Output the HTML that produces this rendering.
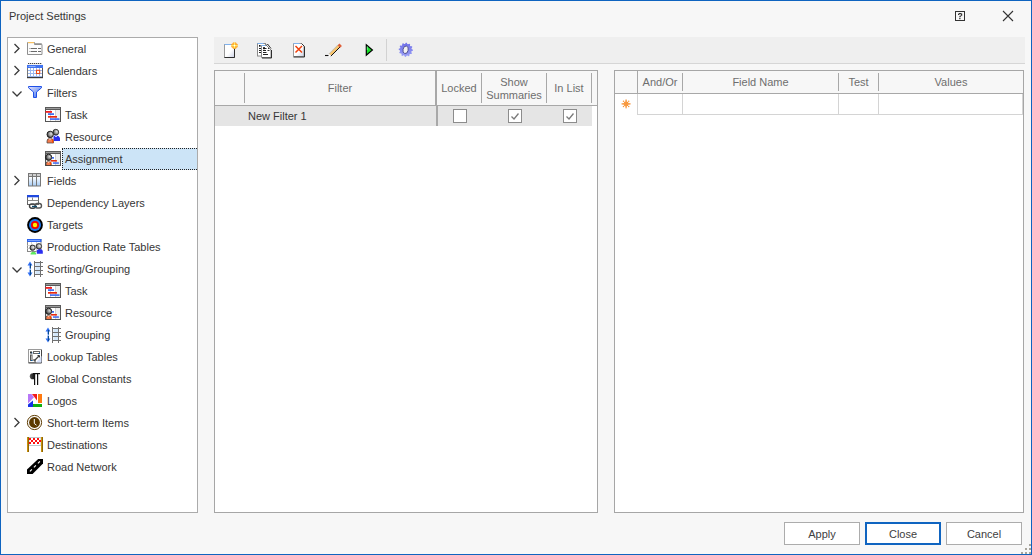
<!DOCTYPE html>
<html><head><meta charset="utf-8">
<style>
*{box-sizing:border-box;margin:0;padding:0}
html,body{width:1032px;height:555px;overflow:hidden;background:#f7f7f7}
body{position:relative;font-family:"Liberation Sans",sans-serif;font-size:11px;color:#363636}
.a{position:absolute}
svg.a{overflow:visible}
.win{left:0;top:0;width:1032px;height:555px;border:1px solid #0f64c0}
.t{position:absolute;white-space:nowrap;line-height:22px;height:22px}
.sel{background:#cce4f7;border:1px dotted #222;border-right:none}
.tree{left:7px;top:37px;width:191px;height:476px;border:1px solid #ababab;background:#fff}
.tb{left:214px;top:37px;width:811px;height:27px;background:#efefef;border-bottom:1px solid #d6d6d6}
.grid{border:1px solid #a6a6a6;background:#fff}
.hd{position:absolute;color:#6e6e6e;white-space:nowrap;text-align:center;line-height:13px}
.vs{position:absolute;width:1px;background:#a8a8a8}
.hs{position:absolute;height:1px;background:#a8a8a8}
.btn{position:absolute;top:522px;height:23px;border:1px solid #acacac;background:#fff;text-align:center;line-height:21px;color:#404040}
.cb{position:absolute;width:14px;height:14px;border:1px solid #8c8c8c;background:#fff}
</style></head><body>
<div class="a win"></div>
<div class="t" style="left:9px;top:5px">Project Settings</div>
<svg class="a" style="left:950px;top:6px" width="20" height="20" viewBox="0 0 20 20">
<rect x="5.5" y="5.5" width="9" height="9" fill="none" stroke="#333" stroke-width="1"/>
<g fill="#333"><rect x="8.6" y="7" width="2.8" height="1.2"/><rect x="8" y="8" width="1.3" height="1"/><rect x="10.9" y="7.6" width="1.3" height="2.2"/><rect x="9.8" y="9.6" width="1.3" height="1.1"/><rect x="9.2" y="10.3" width="1.3" height="1"/><rect x="9.2" y="12" width="1.3" height="1.2"/></g>
</svg>
<svg class="a" style="left:998px;top:6px" width="20" height="20" viewBox="0 0 20 20">
<path d="M5 5L15 15M15 5L5 15" stroke="#333" stroke-width="1.1"/>
</svg>

<div class="a tree"></div>
<svg class="a" style="left:12px;top:43px" width="10" height="12" viewBox="0 0 10 12" ><path d="M2.5 1L7 5.5L2.5 10" fill="none" stroke="#3a3a3a" stroke-width="1.3"/></svg>
<svg class="a" style="left:27px;top:41px" width="16" height="16" viewBox="0 0 16 16" >
<path d="M0.5 13.5V1.5h7v2h7.5v10z" fill="#fcfcfc" stroke="#8f8f8f"/>
<rect x="1" y="1" width="6" height="1.2" fill="#f8c060"/>
<path d="M7.5 2.5h7v1" fill="none" stroke="#a8a8a8"/>
<path d="M2 7.5h8M11 7.5h3M2 10.5h8M11 10.5h3" stroke="#6a6a6a" stroke-width="1"/>
<path d="M2 7.5h2M2 10.5h2" stroke="#bbb" stroke-width="1"/>
</svg>
<div class="t" style="left:47px;top:38px">General</div>
<svg class="a" style="left:12px;top:65px" width="10" height="12" viewBox="0 0 10 12" ><path d="M2.5 1L7 5.5L2.5 10" fill="none" stroke="#3a3a3a" stroke-width="1.3"/></svg>
<svg class="a" style="left:27px;top:63px" width="16" height="16" viewBox="0 0 16 16" >
<rect x="0" y="4.5" width="16" height="10" fill="#9ab7ee"/>
<rect x="0" y="2" width="16" height="3" fill="#3f72f0"/>
<path d="M1.5 3.5h7" stroke="#9fc0ff" stroke-width="0.8"/>
<g fill="#444"><rect x="1" y="0" width="1.3" height="1.3"/><rect x="3" y="0" width="1.3" height="1.3"/><rect x="5" y="0" width="1.3" height="1.3"/><rect x="7" y="0" width="1.3" height="1.3"/><rect x="9" y="0" width="1.3" height="1.3"/><rect x="11" y="0" width="1.3" height="1.3"/><rect x="13" y="0" width="1.3" height="1.3"/></g>
<rect x="0" y="1" width="16" height="1" fill="#f4f4f4"/>
<g fill="#fff">
<rect x="1" y="5" width="2" height="2"/><rect x="4" y="5" width="2" height="2"/><rect x="7" y="5" width="2" height="2"/><rect x="10" y="5" width="2" height="2"/><rect x="13" y="5" width="2" height="2"/>
<rect x="1" y="8" width="2" height="2"/><rect x="4" y="8" width="2" height="2"/><rect x="7" y="8" width="2" height="2"/><rect x="13" y="8" width="2" height="2"/>
<rect x="1" y="11" width="2" height="2"/><rect x="4" y="11" width="2" height="2"/><rect x="7" y="11" width="2" height="2"/><rect x="10" y="11" width="2" height="2"/><rect x="13" y="11" width="2" height="2"/>
</g>
<rect x="9.5" y="7.3" width="3.2" height="3.2" fill="#fff" stroke="#e84a18" stroke-width="1.1"/>
<path d="M0.5 5v9.5" stroke="#777"/>
<path d="M15.5 5v9.5" stroke="#555"/>
<rect x="0" y="14" width="16" height="1.2" fill="#3a3a3a"/>
</svg>
<div class="t" style="left:47px;top:60px">Calendars</div>
<svg class="a" style="left:11px;top:89px" width="12" height="10" viewBox="0 0 12 10" ><path d="M1.5 2.5L6 7L10.5 2.5" fill="none" stroke="#3a3a3a" stroke-width="1.3"/></svg>
<svg class="a" style="left:27px;top:85px" width="16" height="16" viewBox="0 0 16 16" >
<defs><linearGradient id="flg" x1="0" y1="0" x2="1" y2="1"><stop offset="0" stop-color="#e8e4ff"/><stop offset="0.6" stop-color="#7ea0f4"/><stop offset="1" stop-color="#3a60e8"/></linearGradient></defs>
<path d="M1.5 1.5H14.5V2.8L9.5 7V12.5H6.5V7L1.5 2.8z" fill="url(#flg)" stroke="#1f50e8" stroke-width="1"/>
</svg>
<div class="t" style="left:47px;top:82px">Filters</div>
<svg class="a" style="left:45px;top:107px" width="16" height="16" viewBox="0 0 16 16" >
<rect x="0.5" y="0.5" width="15" height="14" fill="#fff" stroke="#555"/>
<rect x="0" y="0" width="16" height="3" fill="#5a5a5a"/>
<path d="M1 1.5h14" stroke="#9a9a9a" stroke-width="1"/>
<path d="M5.5 3v11M10.5 3v11" stroke="#d0d0d0"/>
<rect x="11" y="3" width="4" height="11" fill="#eeeeee"/>
<rect x="0.5" y="4" width="6.5" height="1.8" fill="#f02020"/>
<rect x="3" y="6.3" width="6" height="1.6" fill="#2f5ff0"/>
<rect x="3" y="9" width="9" height="1.7" fill="#e82a10"/>
<rect x="5" y="11.3" width="9.5" height="1.6" fill="#3a66f2"/>
</svg>
<div class="t" style="left:65px;top:104px">Task</div>
<svg class="a" style="left:45px;top:129px" width="16" height="16" viewBox="0 0 16 16" >
<defs><radialGradient id="hg2" cx="0.65" cy="0.4" r="0.7"><stop offset="0" stop-color="#e4e4e4"/><stop offset="0.55" stop-color="#8c8c8c"/><stop offset="1" stop-color="#1a1a1a"/></radialGradient></defs>
<circle cx="10.8" cy="3.2" r="2.9" fill="url(#hg2)" stroke="#333" stroke-width="0.9"/>
<path d="M8.5 11V7.5Q9.5 6.2 11 6.5Q14.5 6.5 15 9.5V12H9z" fill="#2a2ef0"/>
<path d="M10 6.8L11 8L12 6.8" stroke="#fff" stroke-width="0.8" fill="none"/>
<circle cx="5.2" cy="5.4" r="3.2" fill="url(#hg2)" stroke="#222" stroke-width="1"/>
<path d="M2 12Q2 9.5 5 9.3Q8.5 9.5 8.5 12V14H2z" fill="#f27b4c" stroke="#444" stroke-width="0.7"/>
<rect x="7" y="10.3" width="1.3" height="3.5" fill="#ff4a00"/>
<path d="M4.2 9.4L5 10.5L5.8 9.4" stroke="#fff" stroke-width="0.8" fill="none"/>
</svg>
<div class="t" style="left:65px;top:126px">Resource</div>
<div class="a sel" style="left:62px;top:148px;width:135px;height:22px"></div>
<svg class="a" style="left:45px;top:151px" width="16" height="16" viewBox="0 0 16 16" >
<defs><radialGradient id="hg" cx="0.65" cy="0.4" r="0.7"><stop offset="0" stop-color="#dcdcdc"/><stop offset="0.5" stop-color="#808080"/><stop offset="1" stop-color="#151515"/></radialGradient></defs>
<rect x="0.5" y="0.5" width="15" height="14" fill="#fff" stroke="#555"/>
<rect x="0" y="0" width="16" height="3" fill="#5a5a5a"/>
<path d="M1 1.5h14" stroke="#9a9a9a" stroke-width="1"/>
<path d="M10.5 3v11" stroke="#d0d0d0"/>
<rect x="11" y="3" width="4" height="11" fill="#eeeeee"/>
<rect x="7" y="6.1" width="2" height="1.6" fill="#2f5ff0"/>
<rect x="5.7" y="9" width="6.2" height="1.6" fill="#e82a10"/>
<rect x="7.9" y="11.3" width="6" height="1.5" fill="#3a66f2"/>
<circle cx="3.6" cy="6.3" r="3.1" fill="url(#hg)" stroke="#222" stroke-width="1"/>
<path d="M1 12.5Q1 10.5 3.5 10.3Q6.2 10.5 6.2 12.5V14.5H1z" fill="#f27b4c" stroke="#333" stroke-width="0.7"/>
<rect x="5" y="11" width="1.2" height="3" fill="#ff4a00"/>
<path d="M2.8 10.4L3.6 11.4L4.4 10.4" stroke="#fff" stroke-width="0.8" fill="none"/>
</svg>
<div class="t" style="left:65px;top:148px">Assignment</div>
<svg class="a" style="left:12px;top:175px" width="10" height="12" viewBox="0 0 10 12" ><path d="M2.5 1L7 5.5L2.5 10" fill="none" stroke="#3a3a3a" stroke-width="1.3"/></svg>
<svg class="a" style="left:27px;top:173px" width="16" height="16" viewBox="0 0 16 16" >
<rect x="1" y="0" width="13" height="13.5" fill="#777"/>
<rect x="2" y="1" width="3" height="2" fill="#cfcfcf"/><rect x="6" y="1" width="3" height="2" fill="#cfcfcf"/><rect x="10" y="1" width="3" height="2" fill="#cfcfcf"/>
<defs><linearGradient id="fg" x1="0" y1="0" x2="0" y2="1"><stop offset="0" stop-color="#fff"/><stop offset="1" stop-color="#a9cdf5"/></linearGradient></defs>
<rect x="2" y="4" width="3" height="8.5" fill="url(#fg)"/><rect x="6" y="4" width="3" height="8.5" fill="url(#fg)"/><rect x="10" y="4" width="3" height="8.5" fill="url(#fg)"/>
</svg>
<div class="t" style="left:47px;top:170px">Fields</div>
<svg class="a" style="left:27px;top:195px" width="16" height="16" viewBox="0 0 16 16" >
<rect x="0.5" y="0.5" width="11" height="9" fill="#fff" stroke="#666"/>
<rect x="0" y="0" width="12" height="2.3" fill="#1f49e0"/>
<path d="M5.5 2.5v3M0.5 5.5h11" stroke="#888"/>
<rect x="2.5" y="9" width="6" height="4.2" rx="2.1" fill="none" stroke="#444" stroke-width="1.4"/>
<rect x="8" y="8.5" width="6.5" height="4.5" rx="2.2" fill="none" stroke="#555" stroke-width="1.4"/>
<path d="M5 11.5h5" stroke="#114a6a" stroke-width="1.4"/>
</svg>
<div class="t" style="left:47px;top:192px">Dependency Layers</div>
<svg class="a" style="left:27px;top:217px" width="16" height="16" viewBox="0 0 16 16" >
<circle cx="8" cy="8" r="7.9" fill="#000"/>
<circle cx="8" cy="8" r="6" fill="#1e7bf0"/>
<circle cx="8" cy="8" r="4" fill="#f20000"/>
<circle cx="8" cy="8" r="2.2" fill="#fff000"/>
</svg>
<div class="t" style="left:47px;top:214px">Targets</div>
<svg class="a" style="left:27px;top:239px" width="16" height="16" viewBox="0 0 16 16" >
<defs><radialGradient id="hg3" cx="0.65" cy="0.4" r="0.7"><stop offset="0" stop-color="#eee"/><stop offset="0.6" stop-color="#9a9a9a"/><stop offset="1" stop-color="#222"/></radialGradient></defs>
<rect x="0.5" y="0.5" width="13.5" height="12" fill="#fff" stroke="#888"/>
<rect x="0" y="0" width="14.5" height="3" fill="#2f66ee"/>
<path d="M1 1.5h12" stroke="#8fb0ff" stroke-width="0.8"/>
<path d="M4.5 3v9.5M9.5 3v9.5M0.5 6.5h13.5M0.5 9.5h13.5" stroke="#d4d4d4"/>
<path d="M3.5 15.5Q3.5 12.8 6.5 12.8Q9.2 12.8 9.2 15.5z" fill="#5ee860"/>
<circle cx="5.6" cy="8.7" r="2.6" fill="url(#hg3)" stroke="#222" stroke-width="0.9"/>
<path d="M9.8 14.8V11.5Q10.5 10 12.5 10Q15.8 10 15.8 12.5V14.8z" fill="#2a2ef0"/>
<circle cx="11.9" cy="7.3" r="2.7" fill="url(#hg3)" stroke="#333" stroke-width="0.9"/>
</svg>
<div class="t" style="left:47px;top:236px">Production Rate Tables</div>
<svg class="a" style="left:11px;top:265px" width="12" height="10" viewBox="0 0 12 10" ><path d="M1.5 2.5L6 7L10.5 2.5" fill="none" stroke="#3a3a3a" stroke-width="1.3"/></svg>
<svg class="a" style="left:27px;top:261px" width="16" height="16" viewBox="0 0 16 16" >
<path d="M3 0.5L5.5 4.5H4v3H2.5v-3H0.5z" fill="#2f6ef0"/>
<path d="M3 15.5L5.5 11.5H4v-3H2.5v3H0.5z" fill="#2f6ef0"/>
<path d="M3.5 3v4.5M3.5 9v5" stroke="#0a4a8a" stroke-width="1"/>
<rect x="8.5" y="2" width="4.5" height="3" fill="#d4e8fb"/><rect x="8.5" y="6" width="4.5" height="3" fill="#d4e8fb"/><rect x="8.5" y="10" width="4.5" height="3" fill="#d4e8fb"/>
<path d="M7.5 0v16M13.5 0v16M7 1.5h9M7 5.5h9M7 9.5h9M7 13.5h9" stroke="#707070" stroke-width="1"/>
</svg>
<div class="t" style="left:47px;top:258px">Sorting/Grouping</div>
<svg class="a" style="left:45px;top:283px" width="16" height="16" viewBox="0 0 16 16" >
<rect x="0.5" y="0.5" width="15" height="14" fill="#fff" stroke="#555"/>
<rect x="0" y="0" width="16" height="3" fill="#5a5a5a"/>
<path d="M1 1.5h14" stroke="#9a9a9a" stroke-width="1"/>
<path d="M5.5 3v11M10.5 3v11" stroke="#d0d0d0"/>
<rect x="11" y="3" width="4" height="11" fill="#eeeeee"/>
<rect x="0.5" y="4" width="6.5" height="1.8" fill="#f02020"/>
<rect x="3" y="6.3" width="6" height="1.6" fill="#2f5ff0"/>
<rect x="3" y="9" width="9" height="1.7" fill="#e82a10"/>
<rect x="5" y="11.3" width="9.5" height="1.6" fill="#3a66f2"/>
</svg>
<div class="t" style="left:65px;top:280px">Task</div>
<svg class="a" style="left:45px;top:305px" width="16" height="16" viewBox="0 0 16 16" >
<defs><radialGradient id="hg" cx="0.65" cy="0.4" r="0.7"><stop offset="0" stop-color="#dcdcdc"/><stop offset="0.5" stop-color="#808080"/><stop offset="1" stop-color="#151515"/></radialGradient></defs>
<rect x="0.5" y="0.5" width="15" height="14" fill="#fff" stroke="#555"/>
<rect x="0" y="0" width="16" height="3" fill="#5a5a5a"/>
<path d="M1 1.5h14" stroke="#9a9a9a" stroke-width="1"/>
<path d="M10.5 3v11" stroke="#d0d0d0"/>
<rect x="11" y="3" width="4" height="11" fill="#eeeeee"/>
<rect x="7" y="6.1" width="2" height="1.6" fill="#2f5ff0"/>
<rect x="5.7" y="9" width="6.2" height="1.6" fill="#e82a10"/>
<rect x="7.9" y="11.3" width="6" height="1.5" fill="#3a66f2"/>
<circle cx="3.6" cy="6.3" r="3.1" fill="url(#hg)" stroke="#222" stroke-width="1"/>
<path d="M1 12.5Q1 10.5 3.5 10.3Q6.2 10.5 6.2 12.5V14.5H1z" fill="#f27b4c" stroke="#333" stroke-width="0.7"/>
<rect x="5" y="11" width="1.2" height="3" fill="#ff4a00"/>
<path d="M2.8 10.4L3.6 11.4L4.4 10.4" stroke="#fff" stroke-width="0.8" fill="none"/>
</svg>
<div class="t" style="left:65px;top:302px">Resource</div>
<svg class="a" style="left:45px;top:327px" width="16" height="16" viewBox="0 0 16 16" >
<path d="M3 0.5L5.5 4.5H4v3H2.5v-3H0.5z" fill="#2f6ef0"/>
<path d="M3 15.5L5.5 11.5H4v-3H2.5v3H0.5z" fill="#2f6ef0"/>
<path d="M3.5 3v4.5M3.5 9v5" stroke="#0a4a8a" stroke-width="1"/>
<rect x="8.5" y="2" width="4.5" height="3" fill="#d4e8fb"/><rect x="8.5" y="6" width="4.5" height="3" fill="#d4e8fb"/><rect x="8.5" y="10" width="4.5" height="3" fill="#d4e8fb"/>
<path d="M7.5 0v16M13.5 0v16M7 1.5h9M7 5.5h9M7 9.5h9M7 13.5h9" stroke="#707070" stroke-width="1"/>
</svg>
<div class="t" style="left:65px;top:324px">Grouping</div>
<svg class="a" style="left:27px;top:349px" width="16" height="16" viewBox="0 0 16 16" >
<rect x="1.5" y="0.5" width="13" height="13" fill="#fff" stroke="#9a9a9a"/>
<path d="M14.5 1v13h-13" stroke="#444" fill="none"/>
<rect x="3" y="2.5" width="2" height="2" fill="#333"/>
<rect x="6.5" y="2.5" width="6" height="2" fill="none" stroke="#666"/>
<rect x="3.5" y="6" width="1.5" height="5.5" fill="none" stroke="#555"/>
<path d="M4.5 4h1M11.5 4.5h1.5M4 11.5h1.5" stroke="#0a5aa0" fill="none"/>
<path d="M9 13.5h5.5V7z" fill="#d8e2fb"/>
<path d="M7.5 11.5L12 7" stroke="#444" stroke-width="1.3" fill="none"/>
<path d="M10.5 6.5h2v2M7 10v2h2" stroke="#333" stroke-width="1" fill="none"/>
</svg>
<div class="t" style="left:47px;top:346px">Lookup Tables</div>
<svg class="a" style="left:27px;top:371px" width="16" height="16" viewBox="0 0 16 16" >
<defs><linearGradient id="plg" x1="0" y1="0" x2="1" y2="0"><stop offset="0" stop-color="#555"/><stop offset="1" stop-color="#111"/></linearGradient></defs>
<path d="M7.5 2.2H5.8Q2.8 2.2 2.8 5.2Q2.8 8.3 5.8 8.3H7.5z" fill="url(#plg)"/>
<rect x="6" y="2" width="7" height="1.2" fill="#111"/>
<rect x="7" y="2" width="1.2" height="12" fill="#111"/>
<rect x="10" y="2" width="1.2" height="12" fill="#111"/>
</svg>
<div class="t" style="left:47px;top:368px">Global Constants</div>
<svg class="a" style="left:27px;top:393px" width="16" height="16" viewBox="0 0 16 16" >
<path d="M1 1H4.5L7 4.2L1 10.5z" fill="#b877f7"/>
<path d="M5 1H10V7.5z" fill="#f21a1a"/>
<rect x="11" y="1" width="4" height="9" fill="#ff7a10"/>
<path d="M1 13.9V11.6L6 7.4V13.9z" fill="#1431e8"/>
<rect x="6" y="11" width="9" height="3" fill="#10b010"/>
</svg>
<div class="t" style="left:47px;top:390px">Logos</div>
<svg class="a" style="left:12px;top:417px" width="10" height="12" viewBox="0 0 10 12" ><path d="M2.5 1L7 5.5L2.5 10" fill="none" stroke="#3a3a3a" stroke-width="1.3"/></svg>
<svg class="a" style="left:27px;top:415px" width="16" height="16" viewBox="0 0 16 16" >
<circle cx="7.5" cy="7.5" r="7.1" fill="none" stroke="#5c3a00" stroke-width="1"/>
<circle cx="7.5" cy="7.5" r="5.4" fill="#5c3a00"/>
<path d="M7.3 4v4.5L9.5 10.2" stroke="#fff" stroke-width="1" fill="none"/>
</svg>
<div class="t" style="left:47px;top:412px">Short-term Items</div>
<svg class="a" style="left:27px;top:437px" width="16" height="16" viewBox="0 0 16 16" >
<rect x="2" y="0.5" width="12" height="8" fill="#fff" stroke="#bcc8cc" stroke-width="1"/>
<g fill="#ff1010">
<rect x="2" y="1" width="2" height="2"/><rect x="6" y="1" width="2" height="2"/><rect x="10" y="1" width="2" height="2"/>
<rect x="4" y="3" width="2" height="2"/><rect x="8" y="3" width="2" height="2"/><rect x="12" y="3" width="2" height="2"/>
<rect x="2" y="5" width="2" height="2"/><rect x="6" y="5" width="2" height="2"/><rect x="10" y="5" width="2" height="2"/>
</g>
<rect x="0" y="0" width="2" height="15" fill="#c8900a"/>
<rect x="14" y="0" width="2" height="15" fill="#c8900a"/>
<path d="M1.5 0v15M15.5 0v15" stroke="#6a4a00" stroke-width="0.6"/>
</svg>
<div class="t" style="left:47px;top:434px">Destinations</div>
<svg class="a" style="left:27px;top:459px" width="16" height="16" viewBox="0 0 16 16" >
<path d="M11.2 0H16V4.6L5.6 15H0V10.5z" fill="#000"/>
<path d="M2.9 12.3L4.9 10.3M6.9 8.3L8.9 6.3M10.9 4.3L12.9 2.3" stroke="#fff" stroke-width="1.1"/>
</svg>
<div class="t" style="left:47px;top:456px">Road Network</div>

<div class="a tb"></div>
<svg class="a" style="left:222px;top:42px" width="16" height="16" viewBox="0 0 16 16" >
<defs><linearGradient id="pg" x1="0" y1="0" x2="1" y2="1"><stop offset="0.55" stop-color="#fff"/><stop offset="1" stop-color="#c9cfe4"/></linearGradient></defs>
<rect x="2.5" y="2.5" width="10" height="13" fill="url(#pg)" stroke="#9a9a9a"/>
<path d="M2.5 2.5h7" stroke="#7fb2ee" fill="none"/>
<path d="M12.5 3v12.5H2.5" stroke="#2e2e2e" fill="none"/>
<polygon points="15.92,5.02 14.55,5.65 13.92,7.02 12.50,6.50 11.08,7.02 10.45,5.65 9.08,5.02 9.60,3.60 9.08,2.18 10.45,1.55 11.08,0.18 12.50,0.70 13.92,0.18 14.55,1.55 15.92,2.18 15.40,3.60" fill="#ffa830"/>
<path d="M12.5 0.8v5.6M9.7 3.6h5.6" stroke="#ffe860" stroke-width="1.2"/>
<circle cx="12.5" cy="3.6" r="0.8" fill="#fff"/>
</svg>
<svg class="a" style="left:256px;top:42px" width="17" height="16" viewBox="0 0 17 16" >
<rect x="1.5" y="1.5" width="8" height="12.5" fill="#fff" stroke="#8a8a8a"/>
<path d="M1.5 1.5h6" stroke="#7fb2ee" fill="none"/>
<rect x="3" y="3" width="1.6" height="1.7" fill="#111"/>
<path d="M3 6.5h2.5M3 8.5h2.5M3 10.5h2.5" stroke="#222" fill="none"/>
<path d="M5.5 3.5h5l4.5 4.5v7.5H5.5z" fill="#fff" stroke="#8a8a8a"/>
<path d="M5.5 3.5h4" stroke="#7fb2ee" fill="none"/>
<path d="M15.5 8v8H6" stroke="#2e2e2e" fill="none"/>
<path d="M10.5 3.5l1-1.5l3.5 4.5" stroke="#333" fill="none"/>
<rect x="7" y="5.2" width="2" height="2" fill="#111"/>
<path d="M9 6.5h1.5M7 8.5h3M7 10.5h3.5M7 12.5h5" stroke="#222" fill="none"/>
<path d="M11.5 8.5h2M12 6.5h1" stroke="#333" fill="none"/>
</svg>
<svg class="a" style="left:291px;top:42px" width="16" height="16" viewBox="0 0 16 16" >
<defs><linearGradient id="pg2" x1="0" y1="0" x2="1" y2="1"><stop offset="0.55" stop-color="#fff"/><stop offset="1" stop-color="#c9cfe4"/></linearGradient></defs>
<path d="M2.5 1.5h8l2.5 2.5v10.5h-10.5z" fill="url(#pg2)" stroke="#9a9a9a"/>
<path d="M2.5 1.5h6" stroke="#7fb2ee" fill="none"/>
<path d="M13.5 4.5v10.5h-11" stroke="#2e2e2e" fill="none"/>
<path d="M10.5 1.5l3 3" stroke="#2e2e2e" fill="none"/>
<path d="M4.5 4L11 10.5M11 4L4.5 10.5" stroke="#f0400c" stroke-width="1.5" fill="none"/>
</svg>
<svg class="a" style="left:324px;top:42px" width="18" height="16" viewBox="0 0 18 16" >
<path d="M1 13.5h3.5" stroke="#111" stroke-width="1.1" fill="none"/>
<path d="M6.2 12.8L15.2 3.8" stroke="#f6c46e" stroke-width="3" fill="none"/>
<path d="M6.8 14.2L16.2 4.8" stroke="#111" stroke-width="1" fill="none"/>
<path d="M4.8 12L14 2.8" stroke="#b0b0b0" stroke-width="0.7" fill="none"/>
<path d="M14.6 2.4L17 4.8" stroke="#e0603a" stroke-width="2.6" fill="none"/>
<path d="M5.2 14.2L6.2 13.2" stroke="#fff" stroke-width="1.5" fill="none"/>
</svg>
<svg class="a" style="left:362px;top:42px" width="14" height="16" viewBox="0 0 14 16" >
<path d="M4.3 2.8V13.2L10.4 8z" fill="#18e428" stroke="#000" stroke-width="1.2" stroke-linejoin="miter"/>
<path d="M5.3 4.5V8" stroke="#7af0a0" stroke-width="0.8" fill="none"/>
</svg>
<div class="a" style="left:386px;top:39px;width:1px;height:22px;background:#d2d2d2"></div>
<svg class="a" style="left:398px;top:42px" width="16" height="16" viewBox="0 0 16 16" >
<defs><linearGradient id="gg" x1="0" y1="0" x2="0" y2="1"><stop offset="0" stop-color="#6e6ee8"/><stop offset="1" stop-color="#9aa0f6"/></linearGradient></defs>
<polygon points="14.90,7.80 14.84,8.73 13.50,9.33 13.25,10.06 13.95,11.35 13.43,12.12 11.97,11.97 11.39,12.48 11.35,13.95 10.52,14.36 9.33,13.50 8.57,13.65 7.80,14.90 6.87,14.84 6.27,13.50 5.54,13.25 4.25,13.95 3.48,13.43 3.63,11.97 3.12,11.39 1.65,11.35 1.24,10.52 2.10,9.33 1.95,8.57 0.70,7.80 0.76,6.87 2.10,6.27 2.35,5.54 1.65,4.25 2.17,3.48 3.63,3.63 4.21,3.12 4.25,1.65 5.08,1.24 6.27,2.10 7.03,1.95 7.80,0.70 8.73,0.76 9.33,2.10 10.06,2.35 11.35,1.65 12.12,2.17 11.97,3.63 12.48,4.21 13.95,4.25 14.36,5.08 13.50,6.27 13.65,7.03" fill="url(#gg)"/>
<ellipse cx="7.6" cy="7.8" rx="2.6" ry="3.8" transform="rotate(12 7.6 7.8)" fill="#f2f2f2" stroke="#4a4a90" stroke-width="0.9"/>
</svg>

<!-- left grid -->
<div class="a grid" style="left:214px;top:70px;width:384px;height:443px"></div>
<div class="a" style="left:215px;top:71px;width:382px;height:34px;background:#f7f7f7"></div>
<div class="hs" style="left:215px;top:105px;width:382px"></div>
<div class="vs" style="left:244px;top:73px;height:30px"></div>
<div class="a" style="left:435px;top:71px;width:2px;height:34px;background:#a8a8a8"></div>
<div class="vs" style="left:481px;top:73px;height:30px"></div>
<div class="vs" style="left:546px;top:73px;height:30px"></div>
<div class="vs" style="left:591px;top:73px;height:30px"></div>
<div class="hd" style="left:245px;top:82px;width:190px">Filter</div>
<div class="hd" style="left:437px;top:82px;width:44px">Locked</div>
<div class="hd" style="left:482px;top:76px;width:64px">Show<br>Summaries</div>
<div class="hd" style="left:547px;top:82px;width:44px">In List</div>
<div class="a" style="left:215px;top:106px;width:377px;height:20px;background:#e5e5e5"></div>
<div class="a" style="left:436px;top:106px;width:2px;height:20px;background:#a8a8a8"></div>
<div class="t" style="left:248px;top:105px">New Filter 1</div>
<div class="cb" style="left:453px;top:109px"></div>
<div class="cb" style="left:508px;top:109px"></div>
<div class="cb" style="left:563px;top:109px"></div>
<svg class="a" style="left:508px;top:109px" width="14" height="14"><path d="M3.5 7.5L6 10L10.5 4.5" fill="none" stroke="#7a7a7a" stroke-width="1.3"/></svg>
<svg class="a" style="left:563px;top:109px" width="14" height="14"><path d="M3.5 7.5L6 10L10.5 4.5" fill="none" stroke="#7a7a7a" stroke-width="1.3"/></svg>

<!-- right grid -->
<div class="a grid" style="left:614px;top:70px;width:410px;height:443px"></div>
<div class="a" style="left:615px;top:71px;width:408px;height:22px;background:#f7f7f7"></div>
<div class="hs" style="left:615px;top:93px;width:408px"></div>
<div class="vs" style="left:637px;top:71px;height:22px"></div>
<div class="vs" style="left:682px;top:73px;height:18px"></div>
<div class="vs" style="left:838px;top:73px;height:18px"></div>
<div class="vs" style="left:878px;top:73px;height:18px"></div>
<div class="hd" style="left:638px;top:76px;width:44px">And/Or</div>
<div class="hd" style="left:683px;top:76px;width:155px">Field Name</div>
<div class="hd" style="left:839px;top:76px;width:39px">Test</div>
<div class="hd" style="left:879px;top:76px;width:144px">Values</div>
<div class="a" style="left:637px;top:94px;width:386px;height:21px;border:1px solid #d4d4d4;border-top:none"></div>
<div class="a" style="left:682px;top:94px;width:1px;height:20px;background:#d4d4d4"></div>
<div class="a" style="left:838px;top:94px;width:1px;height:20px;background:#d4d4d4"></div>
<div class="a" style="left:878px;top:94px;width:1px;height:20px;background:#d4d4d4"></div>
<svg class="a" style="left:620px;top:98px" width="12" height="12" viewBox="0 0 12 12">
<rect x="4" y="3.8" width="4.2" height="4.2" rx="0.8" fill="#f7902a"/>
<path d="M6.1 1.2v9.4M1.4 5.9h9.4" stroke="#f9b070" stroke-width="1.2"/>
<path d="M6.1 2.2v7.4M2.4 5.9h7.4" stroke="#f7963a" stroke-width="1.2"/>
<g fill="#f7963a"><circle cx="3.5" cy="3.3" r="0.75"/><circle cx="8.7" cy="3.3" r="0.75"/><circle cx="3.5" cy="8.5" r="0.75"/><circle cx="8.7" cy="8.5" r="0.75"/></g>
</svg>

<div class="btn" style="left:784px;width:76px;padding-top:1px">Apply</div>
<div class="btn" style="left:865px;width:76px;border:2px solid #0f64c0;line-height:19px;padding-top:1px">Close</div>
<div class="btn" style="left:946px;width:76px;padding-top:1px">Cancel</div>
<svg class="a" style="left:1020px;top:543px" width="12" height="12">
<g fill="#a8a49c"><rect x="9" y="1" width="2" height="2"/><rect x="5" y="5" width="2" height="2"/><rect x="9" y="5" width="2" height="2"/><rect x="1" y="9" width="2" height="2"/><rect x="5" y="9" width="2" height="2"/><rect x="9" y="9" width="2" height="2"/></g>
</svg>
</body></html>
